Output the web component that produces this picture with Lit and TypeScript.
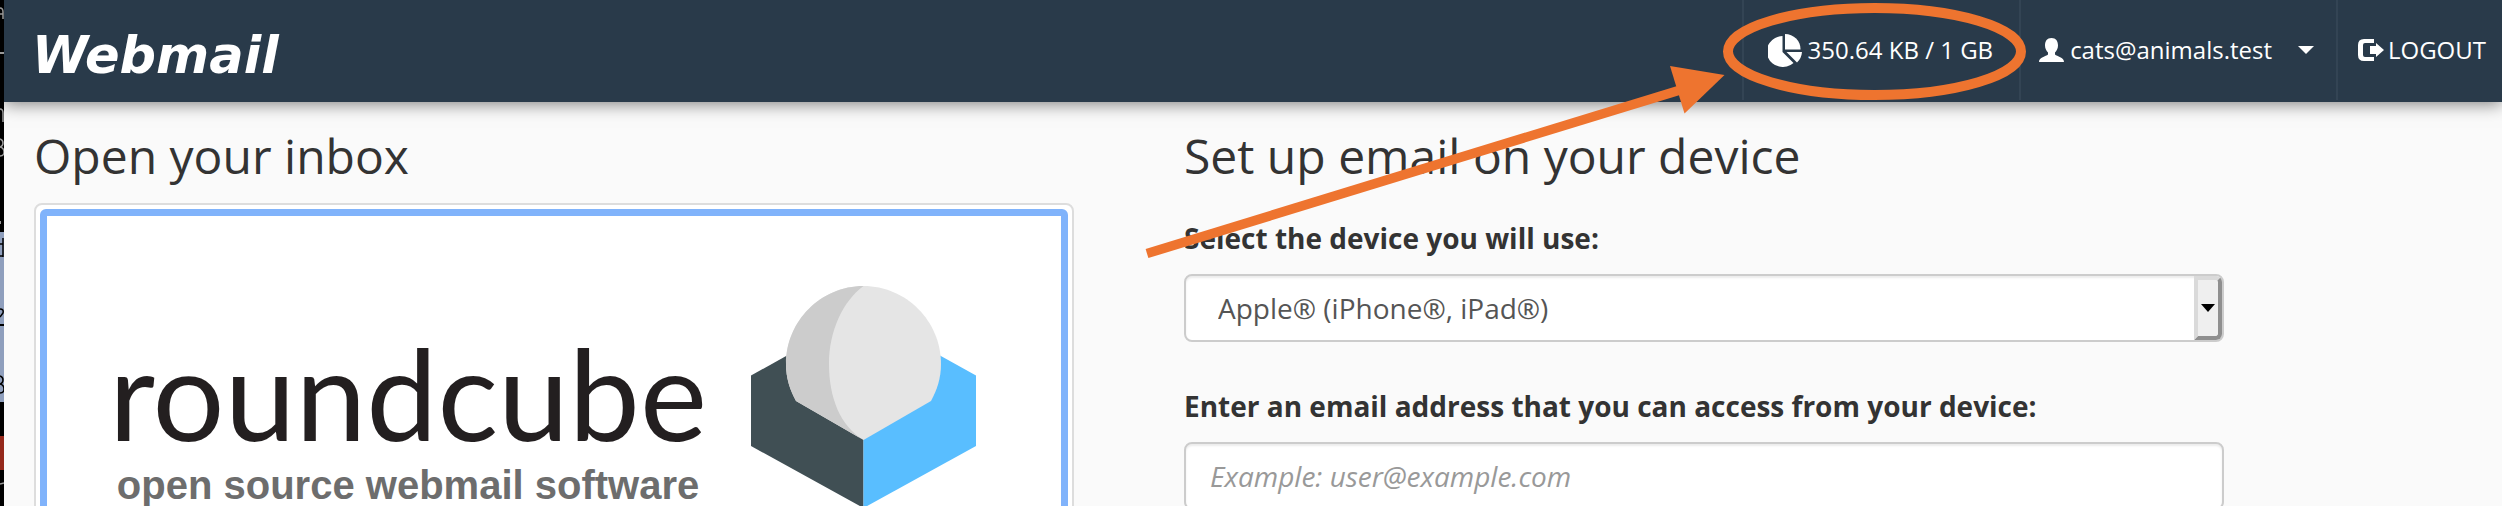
import { LitElement, html, css } from "lit";
import { customElement } from "lit/decorators.js";

@customElement("app-header")
class AppHeader extends LitElement {
  static styles = css`
    :host { display: block; position: relative; }
    .bar {
      display: flex; align-items: stretch; height: 102px;
      background: #293a4a; box-shadow: 0 2px 16px rgba(0, 0, 0, 0.5);
      color: #fff; font-family: "Open Sans", "Noto Sans", sans-serif; font-size: 24px; line-height: 32px;
    }
    .brand {
      display: flex; align-items: center; margin-right: auto; padding: 10px 30px 0 28px;
      font-family: "DejaVu Sans", sans-serif; font-weight: 700; font-style: italic; font-size: 51px;
      line-height: 60px; color: #fff; text-decoration: none;
    }
    .item {
      display: flex; align-items: center; box-sizing: border-box; height: 100px; gap: 6px;
      border: 0; border-left: 2px solid #334454; background: none; color: #fff; font: inherit;
      text-decoration: none; white-space: nowrap;
    }
    .quota { padding: 0 26px 0 24px; }
    .user { padding: 0 22px 0 18px; }
    .logout { padding: 0 16px 0 20px; gap: 4px; }
    .caret { margin-left: 20px; }
    svg { display: block; flex: none; }
  `;
  render() {
    return html`
      <header class="bar">
        <a class="brand" href="#">Webmail</a>
        <a class="item quota" href="#quota">
          <svg width="34" height="33" viewBox="0 0 34 33" fill="#fff" aria-hidden="true">
            <path d="M14.500 2v16l11 11A16 15.500 0 1 1 14.500 2z" />
            <path d="M17 0a15.500 15 0 0 1 15.500 15.500H17z" />
            <path d="M18.500 18H34a16 16 0 0 1-5 10.500z" />
          </svg>
          350.64 KB / 1 GB
        </a>
        <button class="item user" type="button">
          <svg width="25" height="24" viewBox="0 0 25 24" fill="#fff" aria-hidden="true">
            <path d="M12.500 0c4.500 0 6.500 3 6.500 7.500 0 3-1.500 5.500-3 7v2c2 2 9 2.500 9 7.500H0c0-5 7-5.500 9-7.500v-2c-1.500-1.500-3-4-3-7C6 3 8 0 12.500 0z" />
          </svg>
          cats@animals.test
          <svg class="caret" width="16" height="8" viewBox="0 0 16 8" fill="#fff" aria-hidden="true"><path d="M0 0h16L8 8z" /></svg>
        </button>
        <a class="item logout" href="#logout">
          <svg width="26" height="22" viewBox="0 0 26 22" fill="#fff" aria-hidden="true">
            <path d="M16 0H6Q0 0 0 6v10q0 6 6 6h10v-4H7q-2 0-2-2V6q0-2 2-2h9z" />
            <path d="M12 7h6V4l8 7-8 7v-3h-6z" />
          </svg>
          LOGOUT
        </a>
      </header>
    `;
  }
}

@customElement("inbox-card")
class InboxCard extends LitElement {
  static styles = css`
    :host { display: block; }
    .frame {
      display: block; padding: 4px; border: 2px solid #ddd; border-radius: 8px;
      background: #fff; text-decoration: none;
    }
    .client {
      display: flex; gap: 44px; height: 420px; box-sizing: border-box;
      padding: 70px 0 0 62px; border: 7px solid #80b3fb; border-radius: 6px;
    }
    .words { display: flex; flex-direction: column; align-items: center; padding-top: 42px; }
    .name { font: 400 127px/128px Lato, sans-serif; color: #231f20; }
    .tagline { font: 700 40px/58px "Liberation Sans", Arial, sans-serif; color: #6d6d6d; }
    svg { display: block; flex: none; }
  `;
  render() {
    return html`
      <a class="frame" href="#roundcube">
        <div class="client">
          <div class="words">
            <span class="name">roundcube</span>
            <span class="tagline">open source webmail software</span>
          </div>
          <svg width="225" height="222" viewBox="0 0 225 222" aria-hidden="true">
            <path fill="#404f54" d="M0 89.500 36 69.500 112.500 153v69L0 160z" />
            <path fill="#59beff" d="M225 89.500 189 69.500 112.500 153v69L225 160z" />
            <path fill="#e5e5e5" d="M112.500 0C155 0 190 35 190 78c0 14-4 26-10 37l-67.500 39L45 115C39 104 35 92 35 78 35 35 70 0 112.500 0z" />
            <path fill="#ccc" d="M112.500 0C92 15 78 45 78 78s11 62 34.500 76L45 115C39 104 35 92 35 78 35 35 70 0 112.500 0z" />
          </svg>
        </div>
      </a>
    `;
  }
}

@customElement("device-form")
class DeviceForm extends LitElement {
  static styles = css`
    :host { display: block; font-family: "Open Sans", "Noto Sans", sans-serif; }
    form { display: flex; flex-direction: column; padding-top: 15px; }
    label { font-weight: 700; font-size: 28px; line-height: 40px; color: #333; }
    .control { display: flex; margin: 16px 0 44px; }
    .box {
      box-sizing: border-box; width: 100%; height: 68px; margin: 0; appearance: none;
      border: 2px solid #ccc; border-radius: 8px; background: #fff; color: #555;
      box-shadow: inset 0 2px 2px rgba(0, 0, 0, 0.075);
      font: 400 28px/40px "Open Sans", "Noto Sans", sans-serif; padding: 0 24px;
    }
    .picker { display: grid; }
    .picker > * { grid-area: 1 / 1; }
    .arrow {
      justify-self: end; box-sizing: border-box; width: 28px; height: 64px; margin: 2px; pointer-events: none;
      display: flex; align-items: center; justify-content: center; background: #efefef;
      border: 4px solid; border-color: #dadada #8f8f8f #8f8f8f #dadada; border-radius: 0 6px 6px 0;
    }
    .select { padding: 0 32px; }
    .box::placeholder { color: #999; font-style: italic; opacity: 1; }
  `;
  render() {
    return html`
      <form>
        <label for="device">Select the device you will use:</label>
        <div class="control picker">
          <select id="device" class="box select">
            <option>Apple® (iPhone®, iPad®)</option>
          </select>
          <span class="arrow">
            <svg width="14" height="8" viewBox="0 0 14 8" aria-hidden="true"><path d="M0 0h14L7 8z" /></svg>
          </span>
        </div>
        <label for="email">Enter an email address that you can access from your device:</label>
        <div class="control">
          <input id="email" class="box" type="email" placeholder="Example: user@example.com" />
        </div>
      </form>
    `;
  }
}

@customElement("app-root")
class AppRoot extends LitElement {
  static styles = css`
    :host {
      display: flex; position: relative; height: 100vh; overflow: hidden; background: #000;
      font-family: "Open Sans", "Noto Sans", sans-serif;
    }
    .behind { flex: none; display: block; }
    .page { flex: 1; min-width: 0; background: #fafafa; overflow: hidden; }
    .columns { display: grid; grid-template-columns: 1fr 1fr; gap: 110px; padding: 0 278px 0 30px; }
    h1 { margin: 23px 0 16px; font-weight: 400; font-size: 48px; line-height: 62px; color: #333; }
    .note { position: absolute; top: 0; right: 0; pointer-events: none; }
  `;
  render() {
    return html`
      <svg class="behind" width="4" height="506" viewBox="0 0 4 506" aria-hidden="true">
        <path fill="#8f9fbd" d="M0 232h4v170H0z" />
        <path fill="#95281b" d="M0 436h4v34H0z" />
        <path fill="#999" d="M0 52h4v2H0zM0 221h1v3H0z" />
        <path d="M0 324h4v2H0z" />
        <path fill="none" stroke="#999" stroke-width="1.500" d="M0 8q3 0 3 4v7M0 14h3M0 109q3 0 3 4v9M0 139q3 1 3 4t-3 4q4 1 4 5t-4 4M0 484l4-1" />
        <path fill="none" stroke="#000" stroke-width="1.500" d="M3 238v19M0 244h3M0 256h3M0 309q4 0 3 4l-3 4M0 376q3 1 3 4t-3 4q4 1 4 5t-4 4" />
      </svg>
      <div class="page">
        <app-header></app-header>
        <main class="columns">
          <section>
            <h1>Open your inbox</h1>
            <inbox-card></inbox-card>
          </section>
          <section>
            <h1>Set up email on your device</h1>
            <device-form></device-form>
          </section>
        </main>
      </div>
      <svg class="note" width="1362" height="270" viewBox="1140 0 1362 270" aria-hidden="true">
        <ellipse cx="1874.500" cy="51.500" rx="146.500" ry="43.500" fill="none" stroke="#ee742f" stroke-width="10" />
        <path d="M1147 253.500 1690 87" stroke="#ee742f" stroke-width="9.500" />
        <path d="M1724.500 75 1670 66 1684.500 113.500z" fill="#ee742f" />
      </svg>
    `;
  }
}
